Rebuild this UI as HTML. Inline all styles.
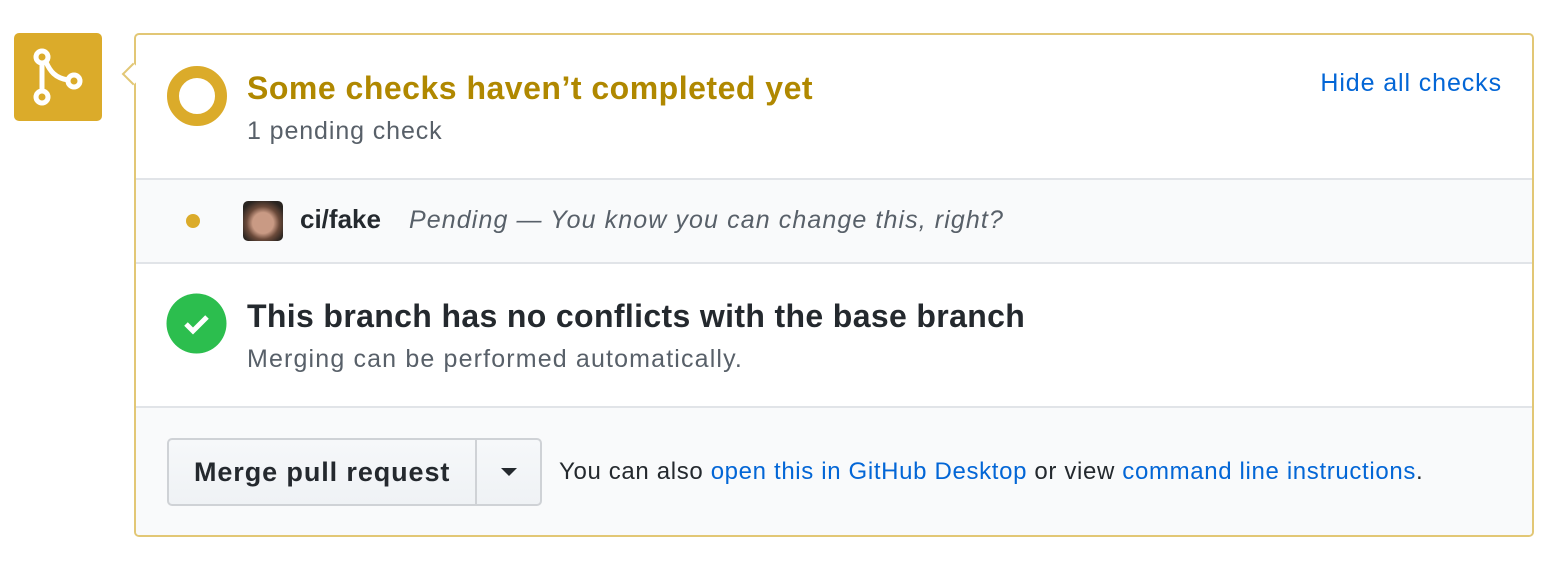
<!DOCTYPE html>
<html><head><style>
body{margin:0;background:#fff;font-family:"Liberation Sans",sans-serif;width:1558px;height:563px;position:relative;overflow:hidden}
.icon{position:absolute;left:14px;top:33px;width:88px;height:88px;background:#dbab2a;border-radius:5px}
.box{position:absolute;left:134px;top:33px;width:1396px;height:500px;border:2px solid #e2c775;border-radius:5px;background:#fff;overflow:hidden}
.arrow{position:absolute;left:125px;top:66px;width:14px;height:14px;background:#fff;border-left:2px solid #e2c775;border-bottom:2px solid #e2c775;transform:rotate(45deg);z-index:5}
.sec{position:absolute;left:0;width:1396px;box-sizing:border-box}
.t{position:absolute;white-space:nowrap}
a{color:#0366d6;text-decoration:none}
</style></head><body>
<div class="icon"><svg width="88" height="88" viewBox="0 0 88 88"><g fill="none" stroke="#fff" stroke-width="5"><circle cx="28" cy="24" r="6"/><circle cx="28" cy="64" r="6"/><circle cx="60" cy="48" r="6"/><path d="M28 30V58M32 29c4 9 9 16 22 18"/></g></svg></div>
<div class="box">
 <div class="sec" style="top:0;height:143px">
  <svg style="position:absolute;left:30px;top:30px" width="62" height="62"><circle cx="31" cy="31" r="24" fill="none" stroke="#dbab2a" stroke-width="12"/></svg>
  <div class="t" style="left:111px;top:35px;font-size:32px;letter-spacing:0.5px;font-weight:bold;color:#b08800">Some checks haven’t completed yet</div>
  <div class="t" style="left:111px;top:82px;font-size:25px;letter-spacing:0.9px;color:#586069">1 pending check</div>
  <div class="t" style="right:30px;top:34px;font-size:25px;letter-spacing:0.9px"><a>Hide all checks</a></div>
 </div>
 <div class="sec" style="top:143px;height:86px;background:#f9fafb;border-top:2px solid #e1e4e8;border-bottom:2px solid #e1e4e8">
  <div style="position:absolute;left:50px;top:34px;width:14px;height:14px;border-radius:50%;background:#dbab2a"></div>
  <div style="position:absolute;left:107px;top:21px;width:40px;height:40px;border-radius:5px;background:radial-gradient(circle at 50% 55%,#c99a84 0 35%,#6b4a3a 55%,#2a2420 80%)"></div>
  <div class="t" style="left:164px;top:24px;font-size:26px;font-weight:bold;color:#24292e">ci/fake</div>
  <div class="t" style="left:273px;top:26px;font-size:25px;letter-spacing:1.1px;font-style:italic;color:#586069">Pending — You know you can change this, right?</div>
 </div>
 <div class="sec" style="top:229px;height:142px">
  <svg style="position:absolute;left:30px;top:29px" width="61" height="61"><circle cx="30.5" cy="30.5" r="30" fill="#2cbe4e"/><path d="M20 31l7 7 14-14" fill="none" stroke="#fff" stroke-width="5"/></svg>
  <div class="t" style="left:111px;top:34px;font-size:32px;letter-spacing:0.35px;font-weight:bold;color:#24292e">This branch has no conflicts with the base branch</div>
  <div class="t" style="left:111px;top:81px;font-size:25px;letter-spacing:1.15px;color:#586069">Merging can be performed automatically.</div>
 </div>
 <div class="sec" style="top:371px;height:129px;background:#f9fafb;border-top:2px solid #e1e4e8">
  <div style="position:absolute;left:31px;top:30px;width:371px;height:64px;border:2px solid #cfd2d6;border-radius:5px;background:linear-gradient(#f6f8fa,#eff2f5)">
   <div class="t" style="left:25px;top:17px;font-size:27px;letter-spacing:0.9px;font-weight:bold;color:#24292e">Merge pull request</div>
   <div style="position:absolute;left:306px;top:0;width:2px;height:64px;background:#cfd2d6"></div>
   <div style="position:absolute;left:332px;top:28px;width:0;height:0;border-left:8px solid transparent;border-right:8px solid transparent;border-top:8px solid #24292e"></div>
  </div>
  <div class="t" style="left:423px;top:50px;font-size:24px;letter-spacing:0.65px;color:#24292e">You can also <a>open this in GitHub Desktop</a> or view <a>command line instructions</a>.</div>
 </div>
</div>
<div class="arrow"></div>
</body></html>
